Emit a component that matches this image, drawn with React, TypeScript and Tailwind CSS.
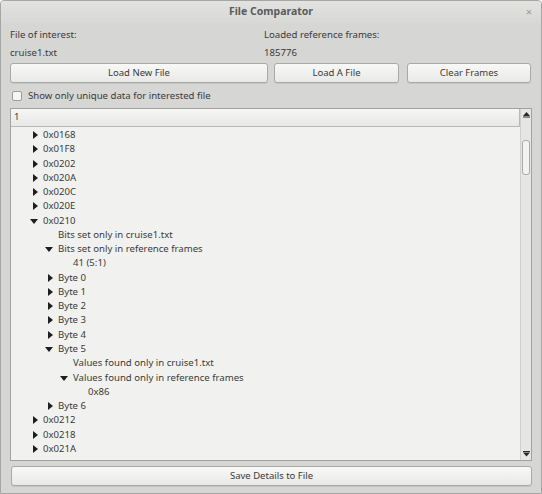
import { ReactNode } from 'react';

type Row = { label: string; level: number; arrow?: 'closed' | 'open' };

const rows: Row[] = [
  { label: '0x0168', level: 0, arrow: 'closed' },
  { label: '0x01F8', level: 0, arrow: 'closed' },
  { label: '0x0202', level: 0, arrow: 'closed' },
  { label: '0x020A', level: 0, arrow: 'closed' },
  { label: '0x020C', level: 0, arrow: 'closed' },
  { label: '0x020E', level: 0, arrow: 'closed' },
  { label: '0x0210', level: 0, arrow: 'open' },
  { label: 'Bits set only in cruise1.txt', level: 1 },
  { label: 'Bits set only in reference frames', level: 1, arrow: 'open' },
  { label: '41 (5:1)', level: 2 },
  { label: 'Byte 0', level: 1, arrow: 'closed' },
  { label: 'Byte 1', level: 1, arrow: 'closed' },
  { label: 'Byte 2', level: 1, arrow: 'closed' },
  { label: 'Byte 3', level: 1, arrow: 'closed' },
  { label: 'Byte 4', level: 1, arrow: 'closed' },
  { label: 'Byte 5', level: 1, arrow: 'open' },
  { label: 'Values found only in cruise1.txt', level: 2 },
  { label: 'Values found only in reference frames', level: 2, arrow: 'open' },
  { label: '0x86', level: 3 },
  { label: 'Byte 6', level: 1, arrow: 'closed' },
  { label: '0x0212', level: 0, arrow: 'closed' },
  { label: '0x0218', level: 0, arrow: 'closed' },
  { label: '0x021A', level: 0, arrow: 'closed' },
];

const indent = ['pl-[32px]', 'pl-[47px]', 'pl-[62px]', 'pl-[77px]'];

function Arrow({ kind }: { kind: 'closed' | 'open' }) {
  if (kind === 'closed') {
    return (
      <svg width="5" height="8" viewBox="0 0 5 8" className="absolute -left-[10px] top-[3px]">
        <path d="M0 0 L5 4 L0 8 Z" fill="#1e1e1e" />
      </svg>
    );
  }
  return (
    <svg width="8" height="5" viewBox="0 0 8 5" className="absolute -left-[13px] top-[5px]">
      <path d="M0 0 L8 0 L4 5 Z" fill="#1e1e1e" />
    </svg>
  );
}

function Button({ children, className }: { children: ReactNode; className: string }) {
  return (
    <button
      className={`h-[20px] rounded-[3px] border border-[#a9aaa6] bg-gradient-to-b from-[#f8f8f7] to-[#e9e9e7] text-[9.5px] text-[#3a3a3a] shadow-[0_1px_0_rgba(0,0,0,0.08)] ${className}`}
    >
      {children}
    </button>
  );
}

export default function App() {
  return (
    <div
      className="w-[542px] h-[494px] bg-[#d6d6d4] border border-[#a6a6a4] rounded-t-[4px] flex flex-col overflow-hidden text-[#3a3a3a]"
      style={{ fontFamily: '"Noto Sans", "Open Sans", sans-serif' }}
    >
      {/* Title bar */}
      <div className="h-[22px] shrink-0 relative flex items-center justify-center bg-gradient-to-b from-[#e2e2e0] to-[#d8d8d6]">
        <span className="text-[10.5px] font-bold text-[#5a5a5a]">File Comparator</span>
        <span className="absolute right-[9px] top-[3px] text-[11px] text-[#9a9a9a]">×</span>
      </div>

      <div className="flex flex-col px-[9px] text-[9.6px]">
        {/* Labels */}
        <div className="flex h-[18px] items-center mt-[3px]">
          <span className="w-[254px]">File of interest:</span>
          <span>Loaded reference frames:</span>
        </div>
        <div className="flex h-[18px] items-center">
          <span className="w-[254px]">cruise1.txt</span>
          <span>185776</span>
        </div>

        {/* Buttons */}
        <div className="flex mt-[1px]">
          <Button className="w-[258px] border-[#9bab8c]">Load New File</Button>
          <Button className="w-[125px] ml-[6px]">Load A File</Button>
          <Button className="w-[124px] ml-[8px]">Clear Frames</Button>
        </div>

        {/* Checkbox */}
        <div className="flex items-center h-[14px] mt-[6px] pl-[2px]">
          <div className="w-[10px] h-[10px] rounded-[2px] border border-[#9c9c9a] bg-[#f6f6f5]" />
          <span className="ml-[6px]">Show only unique data for interested file</span>
        </div>

        {/* Tree view */}
        <div className="mt-[5px] h-[353px] border border-[#a2a3a0] bg-[#f1f2f0] flex">
          <div className="flex-1 flex flex-col overflow-hidden">
            <div className="h-[18px] shrink-0 flex items-center pl-[3px] border-b border-[#b8b9b6] border-r bg-gradient-to-b from-[#f6f6f5] to-[#e8e8e6]">
              1
            </div>
            <div className="flex flex-col pt-[1px]">
              {rows.map((r, i) => (
                <div key={i} className={`h-[14.27px] leading-[14.27px] relative ${indent[r.level]}`}>
                  <span className="relative">
                    {r.arrow && <Arrow kind={r.arrow} />}
                    {r.label}
                  </span>
                </div>
              ))}
            </div>
          </div>
          {/* Scrollbar */}
          <div className="w-[11px] shrink-0 bg-[#e6e7e5] border-l border-[#d0d1ce] relative">
            <svg width="7" height="6" viewBox="0 0 7 6" className="absolute left-[2px] top-[3px]">
              <path d="M3.5 0 L7 4 L0 4 Z" fill="#2a2a2a" />
              <rect x="0" y="4.5" width="7" height="1" fill="#2a2a2a" />
            </svg>
            <div className="absolute left-[1px] top-[31px] w-[8px] h-[35px] rounded-[3px] border border-[#a9aaa7] bg-[#f3f3f2]" />
            <svg width="7" height="6" viewBox="0 0 7 6" className="absolute left-[2px] bottom-[3px]">
              <rect x="0" y="0" width="7" height="1" fill="#2a2a2a" />
              <path d="M0 1.5 L7 1.5 L3.5 5.5 Z" fill="#2a2a2a" />
            </svg>
          </div>
        </div>

        {/* Save */}
        <div className="mt-[5px] flex">
          <Button className="w-[521px] ml-[1px] h-[19px]">Save Details to File</Button>
        </div>
      </div>
    </div>
  );
}
